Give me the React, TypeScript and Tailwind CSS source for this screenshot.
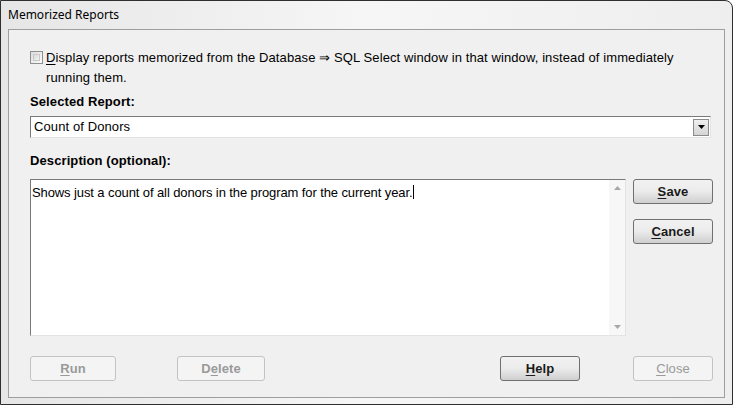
import React from "react";

const font = { fontFamily: '"Liberation Sans", Arial, sans-serif' };

function Btn({
  label,
  u,
  w = "w-[80px]",
  disabled = false,
  bold = true,
}: {
  label: string;
  u: number;
  w?: string;
  disabled?: boolean;
  bold?: boolean;
}) {
  const pre = label.slice(0, u);
  const ch = label[u];
  const post = label.slice(u + 1);
  return (
    <button
      className={`${w} h-[25px] rounded-[3px] border text-[13px] ${bold ? "font-bold" : ""} ${
        disabled
          ? "border-[#c3c3c3] bg-[#f4f4f4] text-[#9a9a9a]"
          : "border-[#707070] bg-gradient-to-b from-[#f2f2f2] via-[#ebebeb] to-[#cfcfcf] text-[#1a1a1a]"
      }`}
    >
      {pre}
      <span className="underline underline-offset-2">{ch}</span>
      {post}
    </button>
  );
}

export default function App() {
  return (
    <div
      className="relative h-[405px] w-[733px] overflow-hidden rounded-tr-[8px] border border-[#2f2f2f] bg-gradient-to-r from-[#e6e6e6] via-[#f6f6f6] to-[#eeeeee]"
      style={font}
    >
      <div className="flex h-[28px] items-center pl-[7px] text-[12px] text-black" style={{ fontFamily: '"Noto Sans", sans-serif' }}>
        Memorized Reports
      </div>
      <div className="mx-[7px] flex h-[369px] flex-col border border-[#9e9e9e] bg-[#f0f0f0] pl-[21px] pr-[11px] pt-[18px] text-[13px] tracking-[0.1px] text-black">
        <div className="flex items-start gap-[3px]">
          <div className="mt-[3px] h-[13px] w-[13px] shrink-0 border border-[#8e8f8f] bg-gradient-to-br from-[#dcdcdc] to-[#fbfbfb] p-[2px]">
            <div className="h-full w-full border border-[#c9c9c9] bg-gradient-to-br from-[#d9d9d9] to-[#f4f4f4]" />
          </div>
          <p className="w-[650px] leading-[20px] first-letter:underline first-letter:underline-offset-2">
            Display reports memorized from the Database ⇒ SQL Select window in that window, instead of immediately running them.
          </p>
        </div>

        <div className="mt-[5px] font-bold leading-[17px]">Selected Report:</div>
        <div className="mt-[6px] flex h-[22px] w-[681px] items-center border border-[#7a7a7a] border-b-[#e3e3e3] border-r-[#e3e3e3] bg-white pl-[3px] pr-[1px]">
          <span className="flex-1">Count of Donors</span>
          <div className="flex h-[17px] w-[16px] items-center justify-center border border-[#8a8a8a] bg-gradient-to-b from-[#f0f0f0] to-[#d4d4d4]">
            <svg width="7" height="4" viewBox="0 0 7 4">
              <path d="M0 0h7L3.5 4z" fill="#000" />
            </svg>
          </div>
        </div>

        <div className="mt-[14px] font-bold leading-[17px]">Description (optional):</div>
        <div className="mt-[10px] flex">
          <div className="flex h-[157px] w-[596px] border border-[#7a7a7a] border-b-[#e3e3e3] border-r-[#e3e3e3] bg-white">
            <div className="flex-1 pl-[1px] pt-[3px] leading-[17px] tracking-[-0.1px]">
              Shows just a count of all donors in the program for the current year.
              <span className="ml-px inline-block h-[14px] w-px translate-y-[2px] bg-black" />
            </div>
            <div className="flex w-[16px] flex-col items-center justify-between bg-[#f7f7f7] py-[6px]">
              <svg width="7" height="4" viewBox="0 0 7 4">
                <path d="M0 4h7L3.5 0z" fill="#a8a8a8" />
              </svg>
              <svg width="7" height="4" viewBox="0 0 7 4">
                <path d="M0 0h7L3.5 4z" fill="#a8a8a8" />
              </svg>
            </div>
          </div>
          <div className="ml-[7px] flex flex-col gap-[15px]">
            <Btn label="Save" u={0} />
            <Btn label="Cancel" u={0} />
          </div>
        </div>

        <div className="mt-[20px] flex items-center">
          <Btn label="Run" u={0} w="w-[86px]" disabled />
          <div className="ml-[61px]">
            <Btn label="Delete" u={1} w="w-[88px]" disabled />
          </div>
          <div className="ml-[235px]">
            <Btn label="Help" u={0} />
          </div>
          <div className="ml-[53px]">
            <Btn label="Close" u={0} disabled bold={false} />
          </div>
        </div>
      </div>
    </div>
  );
}
